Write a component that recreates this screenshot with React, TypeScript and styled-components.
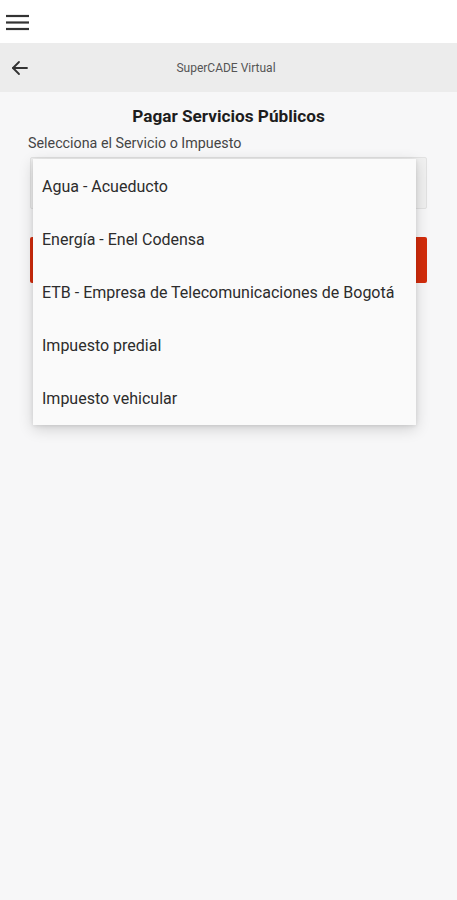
import React from "react";
import styled, { createGlobalStyle } from "styled-components";

const Global = createGlobalStyle`
  html, body { margin: 0; padding: 0; }
  body { font-family: Roboto, "Noto Sans", "Liberation Sans", sans-serif; background: #f7f7f8; }
  * { box-sizing: border-box; }
`;

const Screen = styled.div`
  width: 457px;
  height: 900px;
  display: flex;
  flex-direction: column;
  background: #f7f7f8;
  overflow: hidden;
`;

const TopBar = styled.div`
  height: 43px;
  background: #ffffff;
  display: flex;
  align-items: center;
  padding-left: 6px;
`;

const Header = styled.div`
  height: 49px;
  background: #ececec;
  display: flex;
  align-items: center;
  position: relative;
  padding-left: 11px;
`;

const HeaderTitle = styled.div`
  position: absolute;
  left: 0;
  right: 0;
  text-align: center;
  font-size: 12px;
  color: #555;
  pointer-events: none;
  padding-right: 5px;
`;

const Content = styled.div`
  flex: 1;
  padding: 14px 30px 0 30px;
  display: flex;
  flex-direction: column;
  position: relative;
`;

const PageTitle = styled.h1`
  margin: 0;
  font-size: 17.2px;
  font-weight: 700;
  color: #1d1d1d;
  text-align: center;
  line-height: 20px;
`;

const Label = styled.div`
  margin-top: 8.5px;
  margin-left: -2px;
  font-size: 14.3px;
  color: #454545;
  line-height: 17px;
`;

const SelectBox = styled.div`
  margin-top: 5.5px;
  height: 52px;
  background: #f0f0f0;
  border: 1px solid #e2e2e2;
  border-radius: 2px;
`;

const SubmitButton = styled.div`
  margin-top: 28px;
  height: 46px;
  background: #d32c0c;
  border-radius: 2px;
`;

const Menu = styled.ul`
  position: absolute;
  left: 33px;
  top: 67px;
  width: 383px;
  margin: 0;
  padding: 1px 0 0;
  list-style: none;
  background: #fafafa;
  box-shadow: 0 4px 14px rgba(0, 0, 0, 0.16), 0 1px 4px rgba(0, 0, 0, 0.1);
`;

const MenuItem = styled.li`
  height: 53px;
  display: flex;
  align-items: center;
  padding-left: 9px;
  font-size: 16px;
  color: #2c2c2c;
  white-space: nowrap;
`;

const items = [
  "Agua - Acueducto",
  "Energía - Enel Codensa",
  "ETB - Empresa de Telecomunicaciones de Bogotá",
  "Impuesto predial",
  "Impuesto vehicular",
];

export default function App() {
  return (
    <>
      <Global />
      <Screen>
        <TopBar>
          <svg width="24" height="18" viewBox="0 0 24 18">
            <g stroke="#333" strokeWidth="2.2" strokeLinecap="butt">
              <line x1="0" y1="3" x2="23" y2="3" />
              <line x1="0" y1="9.5" x2="23" y2="9.5" />
              <line x1="0" y1="16" x2="23" y2="16" />
            </g>
          </svg>
        </TopBar>
        <Header>
          <svg width="18" height="16" viewBox="0 0 18 16">
            <g stroke="#333" strokeWidth="1.8" fill="none" strokeLinecap="round" strokeLinejoin="round">
              <line x1="2" y1="8" x2="16" y2="8" />
              <polyline points="8,2 2,8 8,14" />
            </g>
          </svg>
          <HeaderTitle>SuperCADE Virtual</HeaderTitle>
        </Header>
        <Content>
          <PageTitle>Pagar Servicios Públicos</PageTitle>
          <Label>Selecciona el Servicio o Impuesto</Label>
          <SelectBox />
          <SubmitButton />
          <Menu>
            {items.map((t) => (
              <MenuItem key={t}>{t}</MenuItem>
            ))}
          </Menu>
        </Content>
      </Screen>
    </>
  );
}
